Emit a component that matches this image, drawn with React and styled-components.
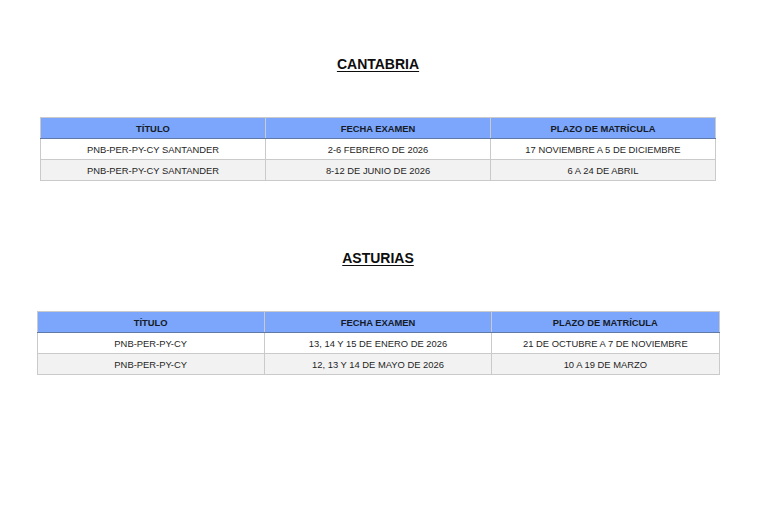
import React from 'react';
import styled, {createGlobalStyle} from 'styled-components';

const GlobalStyle = createGlobalStyle`
    html, body {
        margin: 0;
        padding: 0;
        background: #ffffff;
    }
    body {
        font-family: "Liberation Sans", Arial, sans-serif;
        color: #1f1f1f;
    }
`

const sections = [
    {
        name: 'CANTABRIA',
        width: 676,
        gapBefore: 56,
        rows: [
            ['PNB-PER-PY-CY SANTANDER', '2-6 FEBRERO DE 2026', '17 NOVIEMBRE A 5 DE DICIEMBRE'],
            ['PNB-PER-PY-CY SANTANDER', '8-12 DE JUNIO DE 2026', '6 A 24 DE ABRIL'],
        ]
    },
    {
        name: 'ASTURIAS',
        width: 683,
        gapBefore: 69,
        rows: [
            ['PNB-PER-PY-CY', '13, 14 Y 15 DE ENERO DE 2026', '21 DE OCTUBRE A 7 DE NOVIEMBRE'],
            ['PNB-PER-PY-CY', '12, 13 Y 14 DE MAYO DE 2026', '10 A 19 DE MARZO'],
        ]
    }
];

export default function App() {
    return (
        <Page>
            <GlobalStyle/>
            {sections.map(section => (
                <Section key={section.name} $gap={section.gapBefore}>
                    <Heading>{section.name}</Heading>
                    <Table $width={section.width}>
                        <thead>
                        <tr>
                            <th>TÍTULO</th>
                            <th>FECHA EXAMEN</th>
                            <th>PLAZO DE MATRÍCULA</th>
                        </tr>
                        </thead>
                        <tbody>
                        {section.rows.map((row, index) => (
                            <Row key={index} $alt={index % 2 === 1}>
                                {row.map((cell, i) => <td key={i}>{cell}</td>)}
                            </Row>
                        ))}
                        </tbody>
                    </Table>
                </Section>
            ))}
        </Page>
    )
}

const Page = styled.div`
    width: 756px;
    display: flex;
    flex-direction: column;
    align-items: center;
`

const Section = styled.section`
    display: flex;
    flex-direction: column;
    align-items: center;
    gap: 45px;
    padding-top: ${props => props.$gap}px;
`

const Heading = styled.h2`
    margin: 0;
    font-size: 14px;
    line-height: 16px;
    font-weight: bold;
    color: #0d0d0d;
    text-decoration: underline;
    text-underline-offset: 2px;
`

const Table = styled.table`
    width: ${props => props.$width}px;
    table-layout: fixed;
    border-collapse: collapse;
    border: 1px solid #cacaca;
    font-size: 9.4px;

    th, td {
        text-align: center;
        padding: 0;
        border-left: 1px solid #cacaca;
    }

    th {
        height: 20px;
        background: #7ba6fc;
        font-weight: bold;
        color: #161b26;
        border-bottom: 1px solid #5f7aa8;
    }

    td {
        height: 20px;
        color: #1e1e1e;
        border-bottom: 1px solid #cacaca;
    }
`

const Row = styled.tr`
    background: ${props => props.$alt ? '#f2f2f2' : '#ffffff'};
`
